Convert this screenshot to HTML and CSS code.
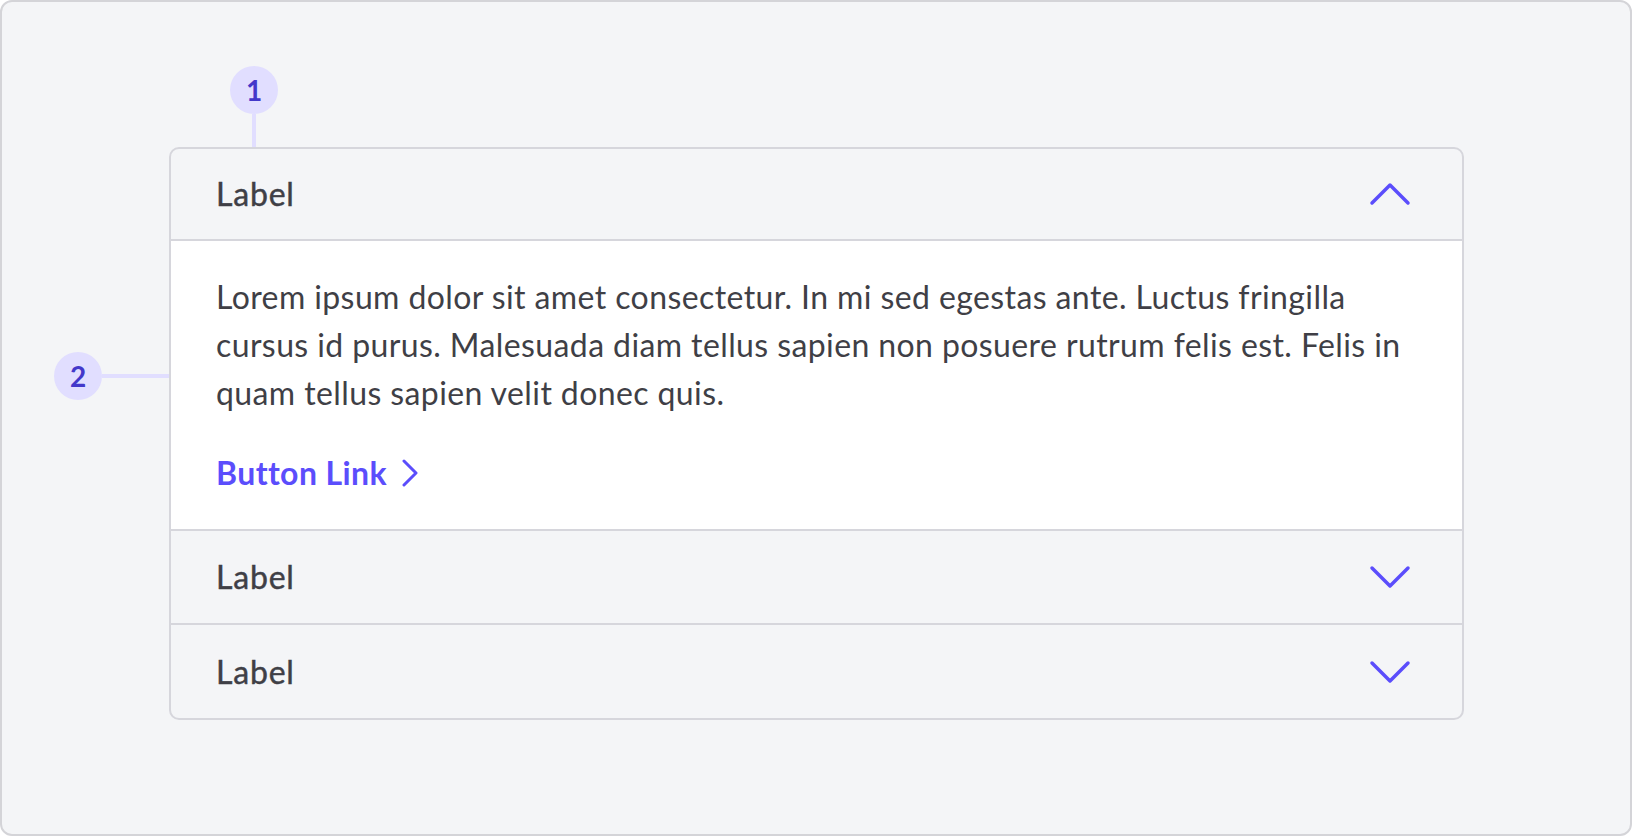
FILE: index.html
```html
<!DOCTYPE html>
<html lang="en">
<head>
<meta charset="utf-8">
<title>Accordion</title>
<link rel="stylesheet" href="styles.css">
</head>
<body>
<div class="frame">
  <div class="accordion">
    <div class="marker marker-1"><span class="badge">1</span><span class="stem"></span></div>
    <div class="marker marker-2"><span class="badge">2</span><span class="arm"></span></div>

    <div class="item item-open">
      <div class="header">
        <span class="label">Label</span>
        <svg class="chev" width="48" height="48" viewBox="0 0 48 48" aria-hidden="true"><polyline points="6,33 24,15 42,33" fill="none" stroke="#5b4dfc" stroke-width="3.5" stroke-linecap="round" stroke-linejoin="round"/></svg>
      </div>
      <div class="panel">
        <p class="body-text">Lorem ipsum dolor sit amet consectetur. In mi sed egestas ante. Luctus fringilla cursus id purus. Malesuada diam tellus sapien non posuere rutrum felis est. Felis in quam tellus sapien velit donec quis.</p>
        <a class="link" href="#">Button Link<svg class="link-chev" width="16" height="28" viewBox="0 0 16 28" aria-hidden="true"><polyline points="2,2 14,14 2,26" fill="none" stroke="#5b4dfc" stroke-width="3" stroke-linecap="round" stroke-linejoin="round"/></svg></a>
      </div>
    </div>

    <div class="item">
      <div class="header">
        <span class="label">Label</span>
        <svg class="chev" width="48" height="48" viewBox="0 0 48 48" aria-hidden="true"><polyline points="6,15 24,33 42,15" fill="none" stroke="#5b4dfc" stroke-width="3.5" stroke-linecap="round" stroke-linejoin="round"/></svg>
      </div>
    </div>

    <div class="item item-last">
      <div class="header">
        <span class="label">Label</span>
        <svg class="chev" width="48" height="48" viewBox="0 0 48 48" aria-hidden="true"><polyline points="6,15 24,33 42,15" fill="none" stroke="#5b4dfc" stroke-width="3.5" stroke-linecap="round" stroke-linejoin="round"/></svg>
      </div>
    </div>
  </div>
</div>
</body>
</html>
```
FILE: styles.css
```css
* { box-sizing: border-box; }

html, body {
  margin: 0;
  padding: 0;
  background: #ffffff;
}

body {
  font-family: "Lato", "Noto Sans", sans-serif;
  color: #3f3f46;
}

.frame {
  width: 1632px;
  height: 836px;
  background: #f4f5f7;
  border: 2px solid #d4d4d8;
  border-radius: 12px;
  padding: 145px 0 0 167px;
}

.accordion {
  position: relative;
  width: 1295px;
  border: 2px solid #d6d6dc;
  border-radius: 10px;
  background: #f4f5f7;
}

.item + .item {
  border-top: 2px solid #d6d6dc;
}

.item:first-of-type .header {
  border-radius: 8px 8px 0 0;
}

.header {
  height: 92px;
  display: flex;
  align-items: center;
  justify-content: space-between;
  padding: 0 48px 0 45px;
}

.item-open .header {
  height: 92px;
  border-bottom: 2px solid #d6d6dc;
}

.item-last .header {
  height: 93px;
}

.label {
  font-size: 32px;
  line-height: 48px;
  font-weight: 400;
  letter-spacing: 0.8px;
  -webkit-text-stroke: 0.45px #3f3f46;
  color: #3f3f46;
}

.chev {
  display: block;
  flex: none;
}

.panel {
  background: #ffffff;
  padding: 32px 48px 32px 45px;
}

.body-text {
  margin: 0 0 32px 0;
  font-size: 32px;
  line-height: 48px;
  letter-spacing: 0.4px;
  color: #3f3f46;
}

.link {
  display: flex;
  width: max-content;
  align-items: center;
  height: 48px;
  font-size: 32px;
  line-height: 48px;
  font-weight: 700;
  letter-spacing: 0.4px;
  color: #5b4dfc;
  text-decoration: none;
}

.link-chev {
  display: block;
  margin-left: 15px;
}

/* annotation markers */
.marker {
  position: absolute;
}

.badge {
  position: absolute;
  width: 48px;
  height: 48px;
  border-radius: 50%;
  background: #e1deff;
  color: #4338ca;
  font-size: 28px;
  font-weight: 700;
  display: flex;
  align-items: center;
  justify-content: center;
  line-height: 1;
}

.marker-1 {
  left: 59px;
  top: -83px;
  width: 48px;
  height: 83px;
}

.marker-1 .badge {
  left: 0;
  top: 0;
}

.stem {
  position: absolute;
  left: 22px;
  top: 48px;
  width: 4px;
  height: 33px;
  background: #e1deff;
}

.marker-2 {
  left: -117px;
  top: 203px;
  width: 117px;
  height: 48px;
}

.marker-2 .badge {
  left: 0;
  top: 0;
}

.arm {
  position: absolute;
  left: 48px;
  top: 22px;
  width: 67px;
  height: 4px;
  background: #e1deff;
}
```
